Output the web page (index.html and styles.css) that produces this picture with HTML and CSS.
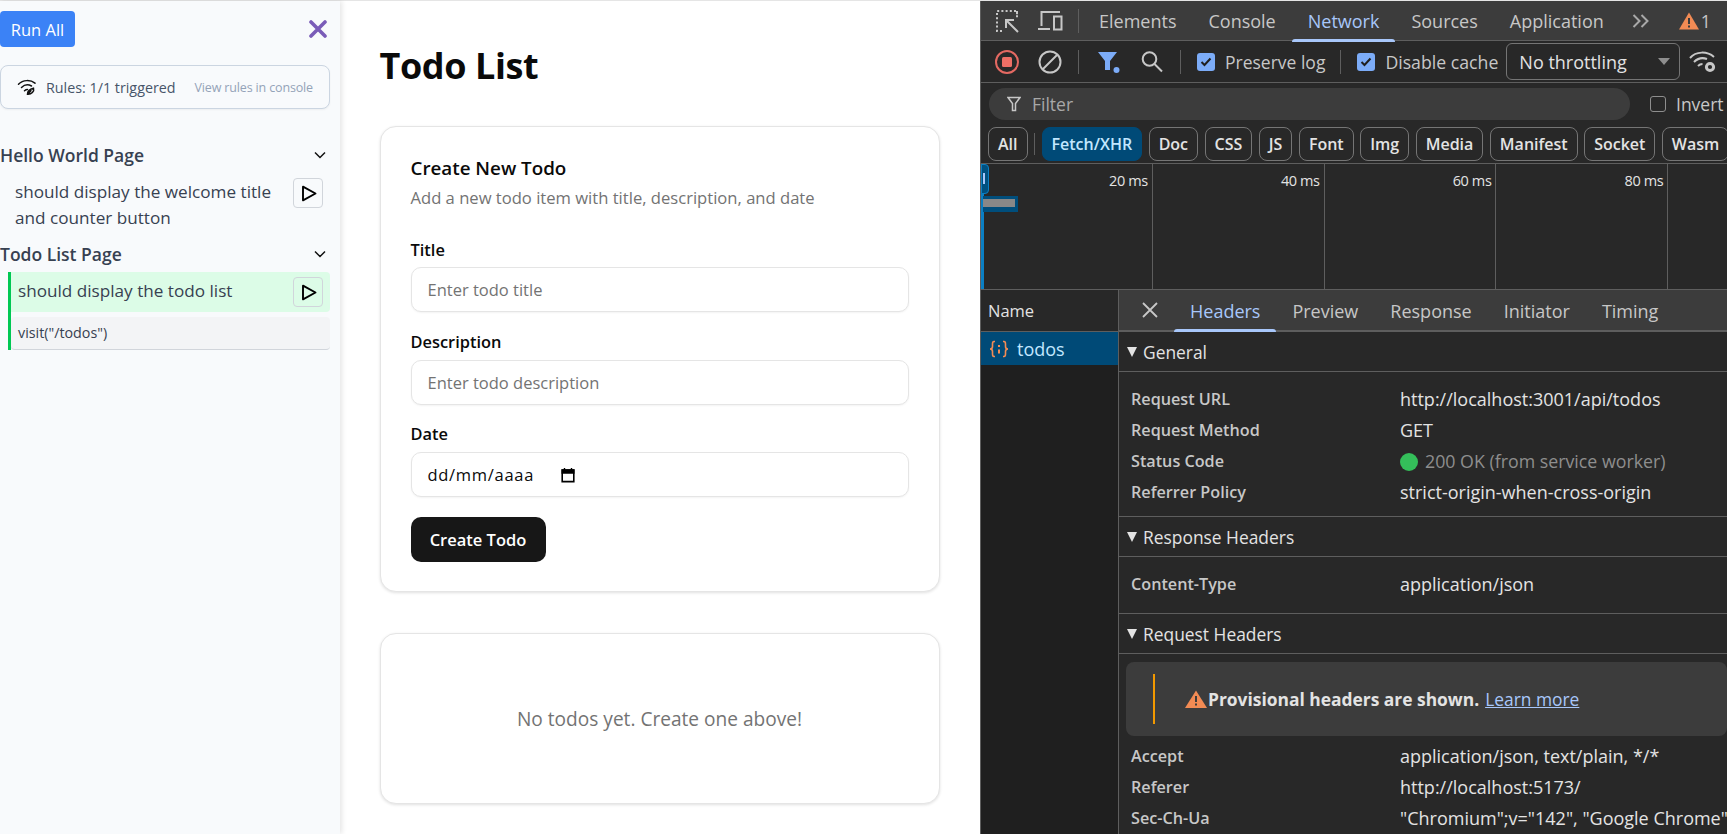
FILE: index.html
```html
<!DOCTYPE html>
<html lang="en">
<head>
<meta charset="utf-8">
<title>Todo List</title>
<link rel="stylesheet" href="styles.css">
</head>
<body>
<div class="app">
  <aside class="sidebar">
    <div class="side-top">
      <button class="run-all">Run All</button>
      <svg class="close-x" viewBox="0 0 18 18" width="18" height="18"><path d="M2 2 L16 16 M16 2 L2 16" stroke="#7a5cb8" stroke-width="3.6" stroke-linecap="round"/></svg>
    </div>
    <div class="rules">
      <svg class="rules-icon" viewBox="0 0 20 18" width="20" height="18"><g fill="none" stroke="#111" stroke-width="1.5" stroke-linecap="round"><path d="M1.5 6.2 C6 1.6 13.5 1.6 18 5.2"/><path d="M4.5 9.5 C7.5 6.6 11.5 6.4 14.5 8"/><path d="M7.5 12.8 C8.6 11.8 9.5 11.5 10.5 11.5"/><path d="M10.5 16.2 C10.5 13.5 13 11 16.5 10.2 C17.5 13.5 14.5 16.5 10.5 16.2 Z M10.5 16.2 L14 12.8"/></g></svg>
      <span class="rules-text">Rules: 1/1 triggered</span>
      <span class="rules-link">View rules in console</span>
    </div>
    <div class="suite first">
      <span>Hello World Page</span>
      <svg class="chev" viewBox="0 0 12 8" width="12" height="8"><path d="M1 1.5 L6 6.5 L11 1.5" fill="none" stroke="#111" stroke-width="1.5"/></svg>
    </div>
    <div class="test">
      <span class="test-name">should display the welcome title and counter button</span>
      <button class="play"><svg viewBox="0 0 16 17" width="16" height="17"><path d="M2 1.7 L14.5 8.5 L2 15.3 Z" fill="none" stroke="#000" stroke-width="1.9" stroke-linejoin="round"/></svg></button>
    </div>
    <div class="suite">
      <span>Todo List Page</span>
      <svg class="chev" viewBox="0 0 12 8" width="12" height="8"><path d="M1 1.5 L6 6.5 L11 1.5" fill="none" stroke="#111" stroke-width="1.5"/></svg>
    </div>
    <div class="active-test">
      <div class="test-pass">
        <span class="test-name">should display the todo list</span>
        <button class="play"><svg viewBox="0 0 16 17" width="16" height="17"><path d="M2 1.7 L14.5 8.5 L2 15.3 Z" fill="none" stroke="#000" stroke-width="1.9" stroke-linejoin="round"/></svg></button>
      </div>
      <div class="step">visit("/todos")</div>
    </div>
  </aside>

  <main class="main">
    <h1 class="page-title">Todo List</h1>
    <section class="card form-card">
      <h2 class="card-title">Create New Todo</h2>
      <p class="card-sub">Add a new todo item with title, description, and date</p>
      <label class="field-label first-label">Title</label>
      <input class="field" placeholder="Enter todo title">
      <label class="field-label">Description</label>
      <input class="field" placeholder="Enter todo description">
      <label class="field-label">Date</label>
      <div class="field date-field">
        <span>dd/mm/aaaa</span>
        <svg viewBox="0 0 14 16" width="14" height="16"><path d="M1.2 3 H12.8 V14.6 H1.2 Z" fill="none" stroke="#000" stroke-width="1.6"/><path d="M1.2 3 H12.8 V6 H1.2 Z M3.5 1 V3 M10.5 1 V3" fill="#000" stroke="#000" stroke-width="1.4"/></svg>
      </div>
      <button class="create-btn">Create Todo</button>
    </section>
    <section class="card empty-card">No todos yet. Create one above!</section>
  </main>

  <div class="devtools">
    <div class="dt-tabs">
      <svg class="ic ic-first" viewBox="0 0 26 26" width="26" height="26"><path d="M8 23 H3 V3 H23 V8" fill="none" stroke="#c7c7c7" stroke-width="2" stroke-dasharray="2 2.2"/><path d="M23 3 V10" fill="none" stroke="#c7c7c7" stroke-width="2" stroke-dasharray="2 2.2"/><path d="M12 20 V12 H20 M12 12 L24 24" fill="none" stroke="#c7c7c7" stroke-width="2"/></svg>
      <svg class="ic ic-device" viewBox="0 0 26 24" width="26" height="24"><path d="M4.5 17 V3 H23 M1 20 H13" fill="none" stroke="#c7c7c7" stroke-width="2"/><rect x="17" y="7.5" width="7.5" height="13" fill="none" stroke="#c7c7c7" stroke-width="2"/></svg>
      <i class="vsep tab-sep"></i>
      <span class="dt-tab">Elements</span>
      <span class="dt-tab">Console</span>
      <span class="dt-tab on">Network</span>
      <span class="dt-tab">Sources</span>
      <span class="dt-tab">Application</span>
      <svg class="more" viewBox="0 0 18 14" width="18" height="14"><path d="M1.5 1 L7.5 7 L1.5 13 M9.5 1 L15.5 7 L9.5 13" fill="none" stroke="#a8a8a8" stroke-width="2"/></svg>
      <svg class="warn" viewBox="0 0 20 18" width="20" height="18"><path d="M10 .5 L20 17.5 H0 Z" fill="#f28b54"/><path d="M9 6 H11 V12 H9 Z M9 13.5 H11 V15.5 H9 Z" fill="#3c3c3c"/></svg>
      <span class="warn-n">1</span>
    </div>
    <div class="dt-bar">
      <svg class="ic ic-first" viewBox="0 0 26 26" width="26" height="26"><circle cx="13" cy="13" r="11" fill="none" stroke="#e46962" stroke-width="2"/><rect x="8" y="8" width="10" height="10" rx="1.5" fill="#ee6f66"/></svg>
      <svg class="ic ic-device" viewBox="0 0 26 26" width="26" height="26"><circle cx="13" cy="13" r="10.5" fill="none" stroke="#c7c7c7" stroke-width="2"/><path d="M5.5 20.5 L20.5 5.5" stroke="#c7c7c7" stroke-width="2"/></svg>
      <i class="vsep tab-sep"></i>
      <svg class="ic filter-ic" viewBox="0 0 24 24" width="24" height="24"><path d="M2 2 H21 L14 11 V20 H9 V11 Z" fill="#7cacf8"/><circle cx="20.5" cy="20" r="3" fill="#7cacf8"/></svg>
      <svg class="ic search-ic" viewBox="0 0 24 24" width="24" height="24"><circle cx="9.5" cy="9" r="6.8" fill="none" stroke="#c7c7c7" stroke-width="2"/><path d="M14.5 14 L22 21.5" stroke="#c7c7c7" stroke-width="2"/></svg>
      <i class="vsep sep-a"></i>
      <span class="check"><svg viewBox="0 0 12 10" width="12" height="10"><path d="M1.5 5 L4.5 8 L10.5 1.5" fill="none" stroke="#1f1f1f" stroke-width="2"/></svg></span>
      <span class="check-label label-a">Preserve log</span>
      <i class="vsep sep-b"></i>
      <span class="check"><svg viewBox="0 0 12 10" width="12" height="10"><path d="M1.5 5 L4.5 8 L10.5 1.5" fill="none" stroke="#1f1f1f" stroke-width="2"/></svg></span>
      <span class="check-label label-b">Disable cache</span>
      <div class="throttle"><span>No throttling</span><i class="tri"></i></div>
      <svg class="wifi" viewBox="0 0 28 24" width="28" height="24"><g fill="none" stroke="#c7c7c7" stroke-width="2"><path d="M1 8 C7 1 18 1 25 7"/><path d="M5 12 C9 8 14 7.500 18 9"/><path d="M9 16 C10.500 14.500 12 14 13.500 14"/></g><circle cx="21" cy="17" r="3.600" fill="none" stroke="#c7c7c7" stroke-width="3"/></svg>
    </div>
    <div class="dt-filter">
      <div class="filter-pill">
        <svg viewBox="0 0 14 16" width="14" height="16"><path d="M1 1.500 H13 L8.500 7.500 V14.500 H5.500 V7.500 Z" fill="none" stroke="#c7c7c7" stroke-width="1.500"/></svg>
        <span>Filter</span>
      </div>
      <span class="invert-box"></span>
      <span class="invert">Invert</span>
    </div>
    <div class="chips">
      <span class="chip">All</span>
      <i class="chip-sep"></i>
      <span class="chip on">Fetch/XHR</span>
      <span class="chip">Doc</span>
      <span class="chip">CSS</span>
      <span class="chip">JS</span>
      <span class="chip">Font</span>
      <span class="chip">Img</span>
      <span class="chip">Media</span>
      <span class="chip">Manifest</span>
      <span class="chip">Socket</span>
      <span class="chip">Wasm</span>
    </div>
    <div class="timeline">
      <div class="tl-cell">20 ms</div>
      <div class="tl-cell">40 ms</div>
      <div class="tl-cell">60 ms</div>
      <div class="tl-cell">80 ms</div>
      <i class="tl-line"></i>
      <i class="tl-handle"></i>
      <i class="tl-bar"></i>
    </div>
    <div class="split">
      <div class="names">
        <div class="names-head">Name</div>
        <div class="name-row">
          <svg viewBox="0 0 20 18" width="20" height="18"><g fill="none" stroke="#f28b54" stroke-width="1.600"><path d="M6 1.500 H5 C3.500 1.500 3.500 3 3.500 4 V6.500 C3.500 8 2.500 9 1 9 C2.500 9 3.500 10 3.500 11.500 V14 C3.500 15 3.500 16.500 5 16.500 H6"/><path d="M14 1.500 H15 C16.500 1.500 16.500 3 16.500 4 V6.500 C16.500 8 17.500 9 19 9 C17.500 9 16.500 10 16.500 11.500 V14 C16.500 15 16.500 16.500 15 16.500 H14"/></g><path d="M9 5 H11 V7 H9 Z M9 9.500 H11 V13.500 H9 Z" fill="#f28b54"/></svg>
          <span>todos</span>
        </div>
      </div>
      <div class="detail">
        <div class="detail-tabs">
          <svg class="detail-x" viewBox="0 0 16 16" width="16" height="16"><path d="M1 1 L15 15 M15 1 L1 15" stroke="#c7c7c7" stroke-width="1.800"/></svg>
          <span class="d-tab on">Headers</span>
          <span class="d-tab">Preview</span>
          <span class="d-tab">Response</span>
          <span class="d-tab">Initiator</span>
          <span class="d-tab">Timing</span>
        </div>
        <div class="sec-head"><i class="caret"></i>General</div>
        <div class="kv-list kv-general">
          <div class="kv"><b>Request URL</b><span>http://localhost:3001/api/todos</span></div>
          <div class="kv"><b>Request Method</b><span>GET</span></div>
          <div class="kv"><b>Status Code</b><span class="status"><i class="dot"></i>200 OK (from service worker)</span></div>
          <div class="kv"><b>Referrer Policy</b><span>strict-origin-when-cross-origin</span></div>
        </div>
        <div class="sec-head"><i class="caret"></i>Response Headers</div>
        <div class="kv-list kv-resp">
          <div class="kv"><b>Content-Type</b><span>application/json</span></div>
        </div>
        <div class="sec-head"><i class="caret"></i>Request Headers</div>
        <div class="notice">
          <i class="notice-bar"></i>
          <svg viewBox="0 0 22 18" width="22" height="18"><path d="M11 .5 L22 18 H0 Z" fill="#f28b54"/><path d="M10 6 H12 V12 H10 Z M10 13.500 H12 V15.500 H10 Z" fill="#3c3c3c"/></svg>
          <strong>Provisional headers are shown.</strong>
          <a class="learn">Learn more</a>
        </div>
        <div class="kv-list kv-req">
          <div class="kv"><b>Accept</b><span>application/json, text/plain, */*</span></div>
          <div class="kv"><b>Referer</b><span>http://localhost:5173/</span></div>
          <div class="kv"><b>Sec-Ch-Ua</b><span>"Chromium";v="142", "Google Chrome"</span></div>
        </div>
      </div>
    </div>
  </div>
</div>
</body>
</html>
```
FILE: styles.css
```css
* { box-sizing: border-box; }
html, body { margin: 0; padding: 0; height: 100%; overflow: hidden; }
body { font-family: "Open Sans", "Noto Sans", sans-serif; background: #fff; color: #0a0a0a; }
button { font: inherit; cursor: pointer; }
i { display: block; font-style: normal; }

.app { display: flex; width: 1727px; height: 834px; border-top: 1px solid #e5e5e5; }

/* Sidebar */
.sidebar { width: 340px; flex: none; background: #f8fafc; padding: 10px 10px 0 0; box-shadow: 2px 0 5px rgba(0,0,0,.10); position: relative; z-index: 1; }
.side-top { display: flex; justify-content: space-between; align-items: center; height: 36px; }
.run-all { width: 75px; height: 36px; background: #3b82f6; color: #fff; border: 0; border-radius: 4px; font-size: 16.5px; padding: 0; }
.close-x { margin-right: 3px; }
.rules { margin-top: 18px; height: 44px; border: 1px solid #cbd5e1; border-radius: 8px; display: flex; align-items: center; padding-left: 16px; background: #f8fafc; box-shadow: 0 1px 2px rgba(0,0,0,.05); }
.rules-icon { flex: none; }
.rules-text { margin-left: 9px; font-size: 14.3px; color: #475569; }
.rules-link { margin-left: auto; margin-right: 16px; font-size: 12.5px; color: #94a3b8; letter-spacing: -.15px; }
.suite { display: flex; justify-content: space-between; align-items: center; height: 26px; padding: 0 4px 0 0; font-size: 17.5px; font-weight: 600; color: #374151; }
.suite.first { margin-top: 33px; }
.test { display: flex; justify-content: space-between; align-items: flex-start; padding: 11px 7px 10px 15px; }
.test-name { font-size: 17.15px; font-weight: 500; line-height: 26px; color: #374151; width: 262px; }
.play { width: 30px; height: 30px; flex: none; margin-top: -1px; padding: 1px 0 0 1px; border: 1px solid #d1d5db; border-radius: 4px; background: transparent; display: flex; align-items: center; justify-content: center; }
.active-test { margin: 5px 0 0 8px; border-left: 3px solid #00c853; }
.test-pass { height: 40px; background: #dcfce7; display: flex; justify-content: space-between; align-items: center; padding: 0 7px 0 7px; border-radius: 0 4px 4px 0; }
.test-pass .play { margin-top: 0; }
.test-pass .test-name { margin-top: -2px; }
.step { margin-top: 5px; height: 33px; background: #f3f4f6; border-bottom: 1px solid #d1d5db; border-radius: 4px; font-size: 14.3px; color: #374151; padding: 6px 7px; }

/* Main */
.main { width: 640px; flex: none; padding: 0 40.5px 0 39.5px; background: #fff; }
.page-title { margin: 40px 0 0; height: 49px; line-height: 49px; font-size: 36px; font-weight: 700; color: #0a0a0a; letter-spacing: -.4px; }
.card { border: 1px solid #e5e5e5; border-radius: 16px; background: #fff; box-shadow: 0 1px 3px rgba(0,0,0,.12); }
.form-card { margin-top: 36px; height: 466px; padding: 29px 30px; }
.card-title { margin: 0; font-size: 18.8px; line-height: 24px; font-weight: 600; color: #0a0a0a; }
.card-sub { margin: 6px 0 0; font-size: 16.6px; line-height: 24px; color: #737373; }
.field-label { display: block; margin-top: 19.5px; height: 22px; line-height: 20px; font-size: 16.4px; font-weight: 600; color: #0a0a0a; }
.first-label { margin-top: 29px; line-height: 22px; }
.field { display: block; width: 100%; height: 45px; margin-top: 6px; padding: 0 16px; border: 1px solid #e5e5e5; border-radius: 10px; background: #fff; font: inherit; font-size: 16.5px; box-shadow: 0 1px 2px rgba(0,0,0,.05); outline: 0; }
.field::placeholder { color: #737373; opacity: 1; }
.date-field { display: flex; align-items: center; gap: 27px; color: #0a0a0a; letter-spacing: .7px; }
.create-btn { display: block; margin-top: 20px; width: 135px; height: 45px; background: #171717; color: #fff; border: 0; border-radius: 10px; font-size: 16.5px; font-weight: 600; padding: 0; }
.empty-card { margin-top: 41px; height: 171px; display: flex; align-items: center; justify-content: center; font-size: 19.1px; color: #737373; }

/* DevTools */
.devtools { width: 747px; flex: none; height: 833px; overflow: hidden; background: #282828; border-left: 1px solid #5e5e5e; color: #e3e3e3; font-size: 17.5px; position: relative; }
.vsep { width: 1px; height: 24px; background: #5e5e5e; flex: none; }
.ic { flex: none; }
.ic-first { margin-left: 13px; }
.ic-device { margin-left: 17px; }
.tab-sep { margin-left: 15px; }
.dt-tabs { display: flex; align-items: center; height: 40px; background: #3c3c3c; border-bottom: 1px solid #5e5e5e; position: relative; }
.dt-tabs > .tab-sep { margin-right: 4px; }
.dt-tab { height: 40px; line-height: 41px; padding: 0 16px; color: #c7c7c7; font-size: 18px; font-weight: 500; position: relative; }
.dt-tab.on { color: #a8c7fa; }
.dt-tab.on::after { content: ""; position: absolute; left: 0; right: 0; bottom: -1px; height: 3px; background: #a8c7fa; border-radius: 3px 3px 0 0; }
.more { margin-left: 12px; flex: none; }
.warn { margin-left: 29px; flex: none; }
.warn-n { margin-left: 2px; color: #c7c7c7; }
.dt-bar { display: flex; align-items: center; height: 42px; border-bottom: 1px solid #5e5e5e; }
.filter-ic { margin-left: 17px; }
.search-ic { margin-left: 20px; }
.sep-a { margin-left: 16px; }
.sep-b { margin-left: 15px; }
.check { width: 18px; height: 18px; margin-left: 16px; flex: none; background: #7cacf8; border-radius: 3px; display: flex; align-items: center; justify-content: center; }
.check-label { margin-left: 10px; white-space: nowrap; color: #c7c7c7; font-size: 17.5px; }
.label-b { font-size: 17.7px; }
.throttle { width: 174px; height: 37px; margin-left: 8px; flex: none; border: 1px solid #757575; border-radius: 6px; display: flex; align-items: center; justify-content: space-between; padding: 0 9px 0 12px; font-size: 18px; color: #e3e3e3; }
.tri { width: 0; height: 0; border: 6px solid transparent; border-top: 7px solid #8e8e8e; border-bottom: 0; }
.wifi { margin-left: 9px; flex: none; }
.dt-filter { display: flex; align-items: center; height: 44px; padding: 0 0 2px 8px; }
.filter-pill { width: 641px; height: 32px; border-radius: 16px; background: #3c3c3c; display: flex; align-items: center; gap: 11px; padding-left: 18px; color: #a8a8a8; font-size: 17.5px; }
.invert-box { width: 16px; height: 16px; margin-left: 20px; flex: none; border: 1.500px solid #8e8e8e; border-radius: 3px; }
.invert { margin-left: 10px; color: #c7c7c7; white-space: nowrap; font-size: 17.5px; }
.chips { display: flex; align-items: center; gap: 6.5px; height: 34px; padding-left: 7px; white-space: nowrap; margin-bottom: 2px; }
.chip { flex: none; height: 34px; line-height: 33px; border: 1px solid #757575; border-radius: 8px; padding: 0 9px; font-size: 16px; font-weight: 600; color: #e3e3e3; }
.chip.on { background: #004a77; border-color: #004a77; color: #c2e7ff; }
.chip-sep { width: 1px; height: 22px; background: #5e5e5e; flex: none; }
.timeline { display: flex; height: 126px; border-top: 1px solid #5e5e5e; position: relative; background: #282828; }
.tl-cell { width: 171.800px; flex: none; border-right: 1px solid #5e5e5e; text-align: right; padding: 7px 4px 0 0; font-size: 14.500px; color: #e3e3e3; letter-spacing: -.4px; line-height: 20px; }
.tl-line { position: absolute; left: 0; top: 0; bottom: 0; width: 3px; background: #0b7fc3; }
.tl-handle { position: absolute; left: 0; top: 0; width: 8px; height: 30px; background: #00507f; border: 1px solid #0b7fc3; border-radius: 0 4px 4px 0; }
.tl-handle::after { content: ""; position: absolute; left: 1px; top: 8px; width: 2px; height: 11px; background: #a8c7fa; }
.tl-bar { position: absolute; left: 2px; top: 32px; width: 35px; height: 16px; background: #004e7c; }
.tl-bar::after { content: ""; position: absolute; left: 0; top: 3px; width: 32px; height: 8px; background: #888; }
.split { display: flex; height: 545px; border-top: 1px solid #5e5e5e; }
.names { width: 138px; flex: none; background: #1f1f1f; border-right: 1px solid #5e5e5e; }
.names-head { height: 42px; line-height: 41px; padding-left: 7px; background: #282828; border-bottom: 1px solid #5e5e5e; color: #e3e3e3; font-size: 16.500px; }
.name-row { height: 33px; background: #004a77; display: flex; align-items: center; gap: 8px; padding-left: 8px; color: #c2e7ff; font-size: 18px; }
.detail { flex: 1; min-width: 0; overflow: hidden; }
.detail-tabs { display: flex; align-items: center; height: 42px; background: #3c3c3c; border-bottom: 2px solid #5e5e5e; }
.detail-x { margin-left: 23px; margin-right: 16px; flex: none; }
.d-tab { height: 40px; line-height: 42px; padding: 0 16px; color: #c7c7c7; font-size: 18px; font-weight: 500; position: relative; }
.d-tab.on { color: #a8c7fa; }
.d-tab.on::after { content: ""; position: absolute; left: 0; right: 0; bottom: -2px; height: 3px; background: #a8c7fa; border-radius: 3px 3px 0 0; }
.sec-head { height: 40px; display: flex; align-items: center; gap: 6px; padding-left: 8px; border-bottom: 1px solid #5e5e5e; color: #e3e3e3; font-size: 17.4px; }
.caret { width: 0; height: 0; border: 5px solid transparent; border-top: 10px solid #e3e3e3; border-bottom: 0; }
.kv-list { border-bottom: 1px solid #5e5e5e; padding-bottom: 5px; }
.kv-general { padding-top: 12px; height: 145px; }
.kv-resp { height: 57px; padding-top: 12px; }
.kv-req { border-bottom: 0; padding-top: 5px; }
.kv { display: flex; height: 31px; line-height: 31px; white-space: nowrap; }
.kv b { width: 281px; flex: none; padding-left: 12px; font-weight: 600; color: #c7c7c7; font-size: 16.2px; }
.kv span { color: #e3e3e3; font-size: 18px; }
.kv .status { color: #8e8e8e; display: flex; align-items: center; gap: 7px; font-size: 17.8px; }
.dot { width: 18px; height: 18px; border-radius: 50%; background: #34bf5a; }
.notice { display: flex; align-items: center; height: 74px; margin: 8px 0 0 7px; background: #3c3c3c; border-radius: 8px; padding-left: 59px; position: relative; color: #e3e3e3; font-size: 17.4px; white-space: nowrap; }
.notice-bar { position: absolute; left: 27px; top: 12px; width: 2px; height: 50px; background: #f29900; }
.notice strong { margin-left: 1px; font-weight: 700; }
.learn { margin-left: 6px; color: #a8c7fa; text-decoration: underline; }
```
